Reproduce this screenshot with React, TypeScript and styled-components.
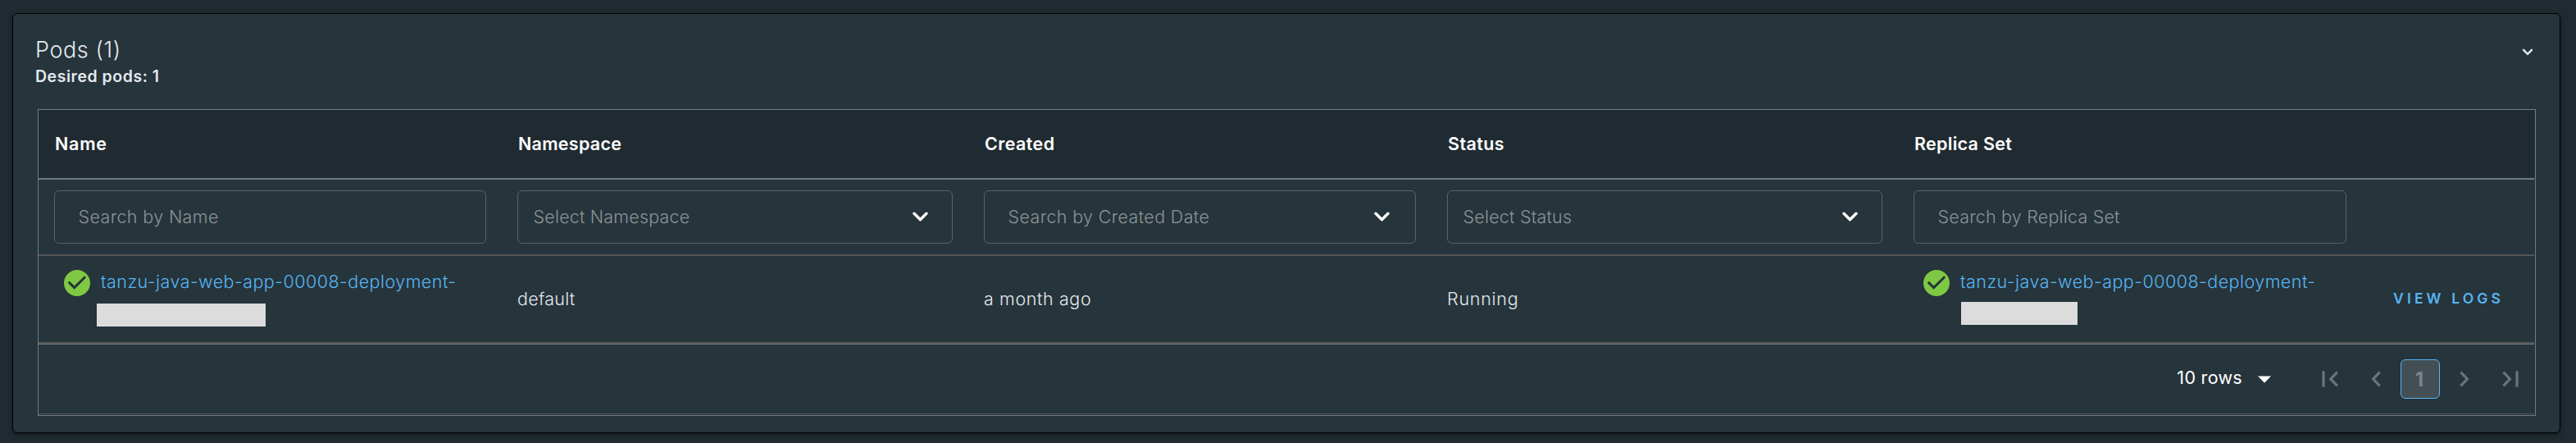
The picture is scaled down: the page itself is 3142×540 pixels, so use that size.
import React from 'react';
import styled, { createGlobalStyle } from 'styled-components';

const GlobalStyle = createGlobalStyle`
  * { box-sizing: border-box; }
  body {
    margin: 0;
    background: #1f2b31;
    color: #e3e9ed;
    font-family: Inter, "Liberation Sans", sans-serif;
    font-size: 21.5px;
    font-weight: 340;
  }
`;

const Page = styled.main`
  height: 540px;
  padding: 16px 19px 12px 15px;
  overflow: hidden;
`;

const Card = styled.section`
  height: 512px;
  padding: 0 29px 0 30px;
  background: #26343b;
  border: 1px solid #000;
  border-radius: 6px;
  box-shadow: 0 2px 5px rgba(0, 0, 0, 0.4);
`;

const CardHeader = styled.header`
  display: flex;
  justify-content: space-between;
  height: 116px;
  padding: 26px 3px 0 0;
  margin-left: -3px;
`;

const Title = styled.h2`
  margin: 0;
  font-size: 27px;
  line-height: 36px;
  font-weight: 280;
  letter-spacing: 0.6px;
`;

const Subtitle = styled.div`
  font-size: 19.5px;
  line-height: 28px;
  font-weight: 600;
  letter-spacing: 0.53px;
`;

const CollapseButton = styled.button`
  display: flex;
  align-self: flex-start;
  margin-top: 16px;
  padding: 0;
  border: 0;
  background: none;
`;

const Table = styled.div`
  width: 3047px;
  height: 374px;
  border: 1px solid #6f7c81;
  padding-right: 1px;
`;

const Row = styled.div<{ $height: number; $line: string; $fill?: string }>`
  display: grid;
  grid-template-columns: 565px 569px 565px 569px 566px 1fr;
  align-items: center;
  height: ${(p) => p.$height}px;
  border-bottom: 2px solid ${(p) => p.$line};
  background: ${(p) => p.$fill ?? 'transparent'};
`;

const HeadCell = styled.div<{ $spacing: number }>`
  padding: 0 19px 2px 20px;
  color: #fff;
  font-weight: 600;
  letter-spacing: ${(p) => p.$spacing}px;
`;

const FilterCell = styled.div`
  padding: 0 19px;
`;

const Field = styled.div<{ $select?: boolean; $end: number }>`
  display: flex;
  align-items: center;
  justify-content: space-between;
  height: 65px;
  padding: 0 ${(p) => p.$end}px 0 ${(p) => (p.$select ? 18.5 : 28.5)}px;
  border: 1px solid #56646a;
  border-radius: 6px;
`;

const Placeholder = styled.span<{ $spacing: number }>`
  padding-bottom: 2px;
  color: #8b9396;
  letter-spacing: ${(p) => p.$spacing}px;
  white-space: nowrap;
`;

const Cell = styled.div<{ $spacing: number }>`
  padding: 0 19px 2px;
  letter-spacing: ${(p) => p.$spacing}px;
`;

const ResourceCell = styled.div`
  display: flex;
  align-self: start;
  gap: 12px;
  padding: 17px 0 0 31px;
`;

const ResourceBody = styled.div`
  margin-top: -2px;
`;

const ResourceLink = styled.a`
  display: block;
  padding-left: 1px;
  color: #57b5f2;
  line-height: 32px;
  letter-spacing: 0.46px;
  white-space: nowrap;
`;

const Redaction = styled.div<{ $width: number; $top: number; $left: number }>`
  width: ${(p) => p.$width}px;
  height: 28px;
  margin: ${(p) => p.$top}px 0 0 ${(p) => p.$left}px;
  background: #dcdcdc;
`;

const LogsButton = styled.button`
  justify-self: start;
  margin-left: 38px;
  padding: 0 0 2px;
  border: 0;
  background: none;
  color: #57b5f2;
  font: 600 17.5px Inter, sans-serif;
  letter-spacing: 4.15px;
  white-space: nowrap;
`;

const FooterWell = styled.div`
  height: 86px;
  padding-bottom: 1px;
  border-top: 1px solid #6f7c81;
`;

const Footer = styled.footer`
  display: flex;
  align-items: center;
  justify-content: flex-end;
  height: 85px;
  padding-right: 19px;
  border-bottom: 1px solid #565656;
`;

const PageSize = styled.div`
  display: flex;
  align-items: center;
  gap: 19px;
  margin-right: 62px;
  color: #fff;
  font-weight: 400;
  letter-spacing: 0.3px;
`;

const PageSizeLabel = styled.span`
  padding-bottom: 5px;
`;

const CaretIcon = styled.svg`
  margin-top: 1px;
`;

const Pager = styled.nav`
  display: flex;
  align-items: center;
  gap: 24px;
`;

const PagerGroup = styled.div`
  display: flex;
  align-items: center;
  gap: 40px;
`;

const PageNumber = styled.span`
  display: flex;
  align-items: center;
  justify-content: center;
  width: 48px;
  height: 48px;
  padding-right: 2px;
  border: 1px solid #57b5f2;
  border-radius: 6px;
  background: #434f55;
  color: #7c868b;
  font-size: 24px;
  font-weight: 650;
`;

const FieldChevron = () => (
  <svg width="19" height="13" viewBox="0 0 19 13" fill="none" stroke="#fff" strokeWidth="3.4" strokeLinecap="round" strokeLinejoin="round">
    <path d="M2 2.2 9.5 9.8 17 2.2" />
  </svg>
);

const StatusIcon = () => (
  <svg width="32" height="32" viewBox="0 0 32 32" fill="none">
    <circle cx="16" cy="16" r="16" fill="#7fc843" />
    <path d="M6.6 15.6 12.7 21.6 25.2 9.2" stroke="#26343b" strokeWidth="3" strokeLinecap="round" />
  </svg>
);

const Arrow = ({ next, bar }: { next?: boolean; bar?: boolean }) => (
  <svg width={bar ? 20 : 12} height="20" viewBox={`0 0 ${bar ? 20 : 12} 20`} fill="none" stroke="#69757b" strokeWidth="3.2">
    {next ? <path d="M1.4 1.6 9.4 10 1.4 18.4" /> : <path d={bar ? 'M18.8 1.6 10.8 10 18.8 18.4' : 'M10.6 1.6 2.6 10 10.6 18.4'} />}
    {bar && (next ? <path d="M18 0.3V19.7" /> : <path d="M2 0.3V19.7" />)}
  </svg>
);

const headings: [string, number][] = [
  ['Name', 0.76],
  ['Namespace', 0.27],
  ['Created', 0.4],
  ['Status', 0.4],
  ['Replica Set', 0.29],
];

const filters: { label: string; spacing: number; select?: boolean; chevron?: boolean }[] = [
  { label: 'Search by Name', spacing: 0.37 },
  { label: 'Select Namespace', spacing: 0.19, select: true, chevron: true },
  { label: 'Search by Created Date', spacing: 0.36, chevron: true },
  { label: 'Select Status', spacing: 0.2, select: true, chevron: true },
  { label: 'Search by Replica Set', spacing: 0.2 },
];

const resource = 'tanzu-java-web-app-00008-deployment-';

export default function App() {
  return (
    <>
      <GlobalStyle />
      <Page>
        <Card>
          <CardHeader>
            <div>
              <Title>Pods (1)</Title>
              <Subtitle>Desired pods: 1</Subtitle>
            </div>
            <CollapseButton aria-label="Collapse">
              <svg width="14" height="10" viewBox="0 0 14 10" fill="none" stroke="#e3e9ed" strokeWidth="2.4" strokeLinecap="round">
                <path d="M2 1.8 7 6.8 12 1.8" />
              </svg>
            </CollapseButton>
          </CardHeader>
          <Table>
            <Row $height={85} $line="#6f7c81" $fill="#1f2b31">
              {headings.map(([label, spacing]) => (
                <HeadCell key={label} $spacing={spacing}>{label}</HeadCell>
              ))}
            </Row>
            <Row $height={93} $line="#565656">
              {filters.map((f) => (
                <FilterCell key={f.label}>
                  <Field $select={f.select} $end={f.select ? 29.5 : f.chevron ? 31.5 : 20}>
                    <Placeholder $spacing={f.spacing}>{f.label}</Placeholder>
                    {f.chevron && <FieldChevron />}
                  </Field>
                </FilterCell>
              ))}
            </Row>
            <Row $height={107} $line="#565656">
              <ResourceCell>
                <StatusIcon />
                <ResourceBody>
                  <ResourceLink>{resource}</ResourceLink>
                  <Redaction $width={206} $top={11} $left={-4} />
                </ResourceBody>
              </ResourceCell>
              <Cell $spacing={0.25}>default</Cell>
              <Cell $spacing={0.6}>a month ago</Cell>
              <Cell $spacing={0.75}>Running</Cell>
              <ResourceCell>
                <StatusIcon />
                <ResourceBody>
                  <ResourceLink>{resource}</ResourceLink>
                  <Redaction $width={142} $top={9} $left={2} />
                </ResourceBody>
              </ResourceCell>
              <LogsButton>VIEW LOGS</LogsButton>
            </Row>
            <FooterWell>
              <Footer>
                <PageSize>
                  <PageSizeLabel>10 rows</PageSizeLabel>
                  <CaretIcon width="16" height="9" viewBox="0 0 16 9">
                    <path d="M0 0.5H16L8 8.7Z" fill="#fff" />
                  </CaretIcon>
                </PageSize>
                <Pager>
                  <PagerGroup>
                    <Arrow bar />
                    <Arrow />
                  </PagerGroup>
                  <PageNumber>1</PageNumber>
                  <PagerGroup>
                    <Arrow next />
                    <Arrow next bar />
                  </PagerGroup>
                </Pager>
              </Footer>
            </FooterWell>
          </Table>
        </Card>
      </Page>
    </>
  );
}
